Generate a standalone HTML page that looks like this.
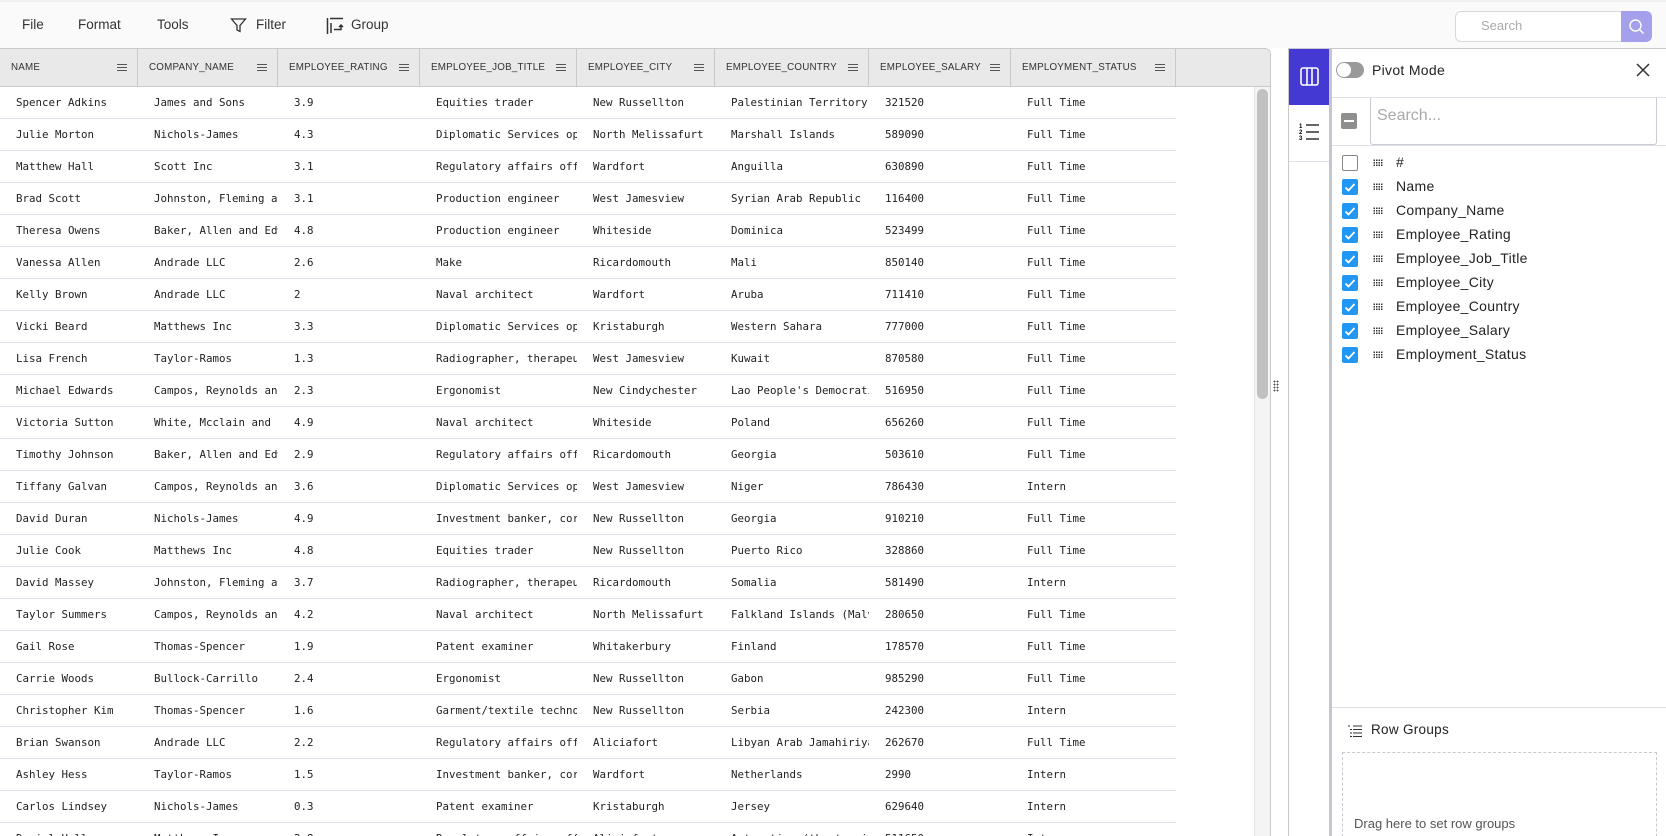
<!DOCTYPE html>
<html><head><meta charset="utf-8"><style>
*{box-sizing:border-box;margin:0;padding:0}
html{width:1666px;height:836px;overflow:hidden}
body{width:1666px;height:836px;overflow:hidden;background:#fff;font-family:"Liberation Sans",sans-serif;position:relative}
.tb{position:absolute;left:0;top:0;width:1666px;height:48px;background:#fafafb;border-top:2px solid #f0f0f2}
.tb span{position:absolute;top:15px;font-size:13.5px;color:#333}
.grid{position:absolute;left:0;top:48px;width:1271px;height:788px;border:1px solid #c9c9cd;border-left:none;border-bottom:none;border-top-right-radius:6px;overflow:hidden;background:#fff}
.hdr{position:absolute;left:0;top:0;width:1270px;height:38px;background:#e9e9ea;border-bottom:1px solid #c9c9cd}
.hc{position:absolute;top:0;height:37px;border-right:1px solid #c9c9cd;font-size:9.8px;color:#333;line-height:37px;padding-left:11px;letter-spacing:.2px}
.hc i{position:absolute;right:10px;top:15px;width:10px;height:7px;border-top:1.5px solid #555;border-bottom:1.5px solid #555}
.hc i:after{content:"";position:absolute;left:0;right:0;top:1.5px;border-top:1.5px solid #555}
.row{position:absolute;left:0;width:1176px;height:32px;border-bottom:1px solid #dde2e8}
.c{position:absolute;top:0;height:31px;line-height:31px;font-family:"DejaVu Sans Mono","Liberation Mono",monospace;font-size:10.8px;color:#222;white-space:nowrap;overflow:hidden;padding-left:16px}
.sb{position:absolute;left:1257px;top:40px;width:11px;height:310px;background:#c1c1c1;border-radius:6px}
.sbt{position:absolute;left:1254px;top:38px;width:16px;height:750px;background:#f4f4f4;border-left:1px solid #e4e4e4}
.tabs{position:absolute;left:1288px;top:48px;width:42px;height:788px;background:#fff;border-left:1px solid #c9c9cd;border-top:1px solid #c9c9cd;overflow:hidden}
.panel{position:absolute;left:1329px;top:48px;width:337px;height:788px;background:#fff;border-left:3px solid #c4c6ce;border-top:1px solid #c9c9cd;overflow:hidden}
.cb{position:absolute;width:16px;height:16px;border-radius:2px;background:#2196f3}
.cb svg{position:absolute;left:1px;top:1px}
.grip{position:absolute;width:10px;height:8px;background-image:radial-gradient(circle,#333 0.7px,transparent 0.9px);background-size:2.5px 2.5px}
.lbl{position:absolute;font-size:14px;color:#222;letter-spacing:.3px}
</style></head><body>
<div class="tb">
<span style="left:22px">File</span><span style="left:78px">Format</span><span style="left:157px">Tools</span>
<svg style="position:absolute;left:230px;top:15px" width="17" height="17" viewBox="0 0 17 17"><path d="M1.5 2h14l-5.5 6.5v6l-3 -1.5v-4.5z" fill="none" stroke="#333" stroke-width="1.3"/></svg>
<span style="left:256px">Filter</span>
<svg style="position:absolute;left:326px;top:15px" width="18" height="18" viewBox="0 0 18 18"><path d="M1.5 1v16M4 1.5h13M5 6v10M8 12.5h7V8M13 10l2-2 2 2" fill="none" stroke="#333" stroke-width="1.5"/></svg>
<span style="left:351px">Group</span>
<div style="position:absolute;left:1455px;top:9px;width:196px;height:31px;border:1px solid #d7d7dc;border-radius:6px;background:#fff"></div>
<span style="left:1481px;color:#aaa;font-size:13px;top:16px">Search</span>
<div style="position:absolute;left:1621px;top:9px;width:31px;height:31px;background:#a4a0ec;border-radius:0 6px 6px 0"><svg width="31" height="31"><circle cx="14.5" cy="14.5" r="5.5" fill="none" stroke="#fff" stroke-width="1.4"/><path d="M18.5 18.5l4 4" stroke="#fff" stroke-width="1.4"/></svg></div>
</div>
<div class="grid">
<div class="hdr">
<div class="hc" style="left:0;width:138px">NAME<i></i></div>
<div class="hc" style="left:138px;width:140px">COMPANY_NAME<i></i></div>
<div class="hc" style="left:278px;width:142px">EMPLOYEE_RATING<i></i></div>
<div class="hc" style="left:420px;width:157px">EMPLOYEE_JOB_TITLE<i></i></div>
<div class="hc" style="left:577px;width:138px">EMPLOYEE_CITY<i></i></div>
<div class="hc" style="left:715px;width:154px">EMPLOYEE_COUNTRY<i></i></div>
<div class="hc" style="left:869px;width:142px">EMPLOYEE_SALARY<i></i></div>
<div class="hc" style="left:1011px;width:165px">EMPLOYMENT_STATUS<i></i></div>
</div>
<div id="rows"></div>
<div class="sbt"></div><div class="sb"></div>
</div>
<div style="position:absolute;left:1273px;top:380px;width:6px;height:12px;background-image:radial-gradient(circle,#555 0.8px,transparent 1px);background-size:3px 3px"></div>
<div class="tabs">
<div style="position:absolute;left:0;top:0;width:41px;height:56px;background:#4539d4"><svg style="position:absolute;left:11px;top:18px" width="20" height="20"><rect x="1" y="1" width="17" height="17" rx="2" fill="none" stroke="#fff" stroke-width="1.6"/><path d="M7 1v17M12 1v17" stroke="#fff" stroke-width="1.6"/></svg></div>
<svg style="position:absolute;left:10px;top:73px" width="22" height="20"><text x="0" y="6" font-size="6" font-family="Liberation Sans" font-weight="bold">1</text><text x="0" y="12" font-size="6" font-family="Liberation Sans" font-weight="bold">2</text><text x="0" y="18" font-size="6" font-family="Liberation Sans" font-weight="bold">3</text><path d="M7 3h13M7 10h13M7 17h13" stroke="#333" stroke-width="1.5"/></svg>
<div style="position:absolute;left:0;top:112px;width:41px;border-top:1px solid #dde0e6"></div>
</div>
<div class="panel">
<div style="position:absolute;left:4px;top:13px;width:28px;height:16px;border-radius:8px;background:#9a9a9a"></div>
<div style="position:absolute;left:5px;top:14px;width:14px;height:14px;border-radius:7px;background:#fff"></div>
<div class="lbl" style="left:40px;top:13px">Pivot Mode</div>
<svg style="position:absolute;left:304px;top:14px" width="14" height="14"><path d="M1 1l12 12M13 1L1 13" stroke="#333" stroke-width="1.5"/></svg>
<div style="position:absolute;left:0;top:48px;width:337px;border-top:1px solid #dde0e6"></div>
<div style="position:absolute;left:9px;top:64px;width:16px;height:16px;background:#8f8f8f;border-radius:2px"><div style="position:absolute;left:3px;top:7px;width:10px;height:2px;background:#fff"></div></div>
<div style="position:absolute;left:38px;top:49px;width:287px;height:47px;border:1px solid #c9ccd4;border-top:none;border-radius:0 0 3px 3px"></div>
<div style="position:absolute;left:45px;top:58px;font-size:16px;color:#aaa">Search...</div>
<div style="position:absolute;left:0;top:96px;width:337px;border-top:1px solid #dde0e6"></div>
<div id="cols"></div>
<div style="position:absolute;left:0;top:658px;width:337px;border-top:1px solid #dde0e6"></div>
<svg style="position:absolute;left:16px;top:676px" width="14" height="12"><path d="M0 1h2M5 1h9M5 4.5h9M5 8h9M5 11.5h9M2 4.5h2M2 8h2M2 11.5h2" stroke="#333" stroke-width="1"/></svg>
<div class="lbl" style="left:39px;top:673px;font-size:13.5px">Row Groups</div>
<div style="position:absolute;left:10px;top:703px;width:315px;height:100px;border:1px dashed #c9c9cd"></div>
<div style="position:absolute;left:22px;top:767px;font-size:13px;color:#555">Drag here to set row groups</div>
</div>
<script>
var d=[["Spencer Adkins","James and Sons","3.9","Equities trader","New Russellton","Palestinian Territory","321520","Full Time"],
["Julie Morton","Nichols-James","4.3","Diplomatic Services operational officer","North Melissafurt","Marshall Islands","589090","Full Time"],
["Matthew Hall","Scott Inc","3.1","Regulatory affairs officer","Wardfort","Anguilla","630890","Full Time"],
["Brad Scott","Johnston, Fleming and Co","3.1","Production engineer","West Jamesview","Syrian Arab Republic","116400","Full Time"],
["Theresa Owens","Baker, Allen and Edwards","4.8","Production engineer","Whiteside","Dominica","523499","Full Time"],
["Vanessa Allen","Andrade LLC","2.6","Make","Ricardomouth","Mali","850140","Full Time"],
["Kelly Brown","Andrade LLC","2","Naval architect","Wardfort","Aruba","711410","Full Time"],
["Vicki Beard","Matthews Inc","3.3","Diplomatic Services operational","Kristaburgh","Western Sahara","777000","Full Time"],
["Lisa French","Taylor-Ramos","1.3","Radiographer, therapeutic","West Jamesview","Kuwait","870580","Full Time"],
["Michael Edwards","Campos, Reynolds and Co","2.3","Ergonomist","New Cindychester","Lao People's Democratic","516950","Full Time"],
["Victoria Sutton","White, Mcclain and Co","4.9","Naval architect","Whiteside","Poland","656260","Full Time"],
["Timothy Johnson","Baker, Allen and Edwards","2.9","Regulatory affairs officer","Ricardomouth","Georgia","503610","Full Time"],
["Tiffany Galvan","Campos, Reynolds and Co","3.6","Diplomatic Services operational","West Jamesview","Niger","786430","Intern"],
["David Duran","Nichols-James","4.9","Investment banker, corporate","New Russellton","Georgia","910210","Full Time"],
["Julie Cook","Matthews Inc","4.8","Equities trader","New Russellton","Puerto Rico","328860","Full Time"],
["David Massey","Johnston, Fleming and Co","3.7","Radiographer, therapeutic","Ricardomouth","Somalia","581490","Intern"],
["Taylor Summers","Campos, Reynolds and Co","4.2","Naval architect","North Melissafurt","Falkland Islands (Malvinas)","280650","Full Time"],
["Gail Rose","Thomas-Spencer","1.9","Patent examiner","Whitakerbury","Finland","178570","Full Time"],
["Carrie Woods","Bullock-Carrillo","2.4","Ergonomist","New Russellton","Gabon","985290","Full Time"],
["Christopher Kim","Thomas-Spencer","1.6","Garment/textile technologist","New Russellton","Serbia","242300","Intern"],
["Brian Swanson","Andrade LLC","2.2","Regulatory affairs officer","Aliciafort","Libyan Arab Jamahiriya","262670","Full Time"],
["Ashley Hess","Taylor-Ramos","1.5","Investment banker, corporate","Wardfort","Netherlands","2990","Intern"],
["Carlos Lindsey","Nichols-James","0.3","Patent examiner","Kristaburgh","Jersey","629640","Intern"],
["Daniel Hall","Matthews Inc","2.8","Regulatory affairs officer","Aliciafort","Antarctica (the territory)","511650","Intern"]];
var L=[0,138,278,420,577,715,869,1011],W=[138,140,142,157,138,154,142,165],h="";
d.forEach(function(r,i){h+='<div class="row" style="top:'+(38+32*i)+'px">';r.forEach(function(v,j){h+='<div class="c" style="left:'+L[j]+'px;width:'+W[j]+'px">'+v+'</div>'});h+='</div>'});
document.getElementById('rows').innerHTML=h;
var cs=["#","Name","Company_Name","Employee_Rating","Employee_Job_Title","Employee_City","Employee_Country","Employee_Salary","Employment_Status"],g="";
cs.forEach(function(v,i){var t=106+24*i;
g+=(i==0?'<div class="cb" style="left:10px;top:'+t+'px;background:#fff;border:1.5px solid #888"></div>':'<div class="cb" style="left:10px;top:'+t+'px"><svg width="14" height="14"><path d="M2.5 7.5l3 3 6-6.5" fill="none" stroke="#fff" stroke-width="1.8"/></svg></div>');
g+='<div class="grip" style="left:41px;top:'+(t+4)+'px"></div><div class="lbl" style="left:64px;top:'+(t-1)+'px">'+v+'</div>'});
document.getElementById('cols').innerHTML=g;
</script>
</body></html>
